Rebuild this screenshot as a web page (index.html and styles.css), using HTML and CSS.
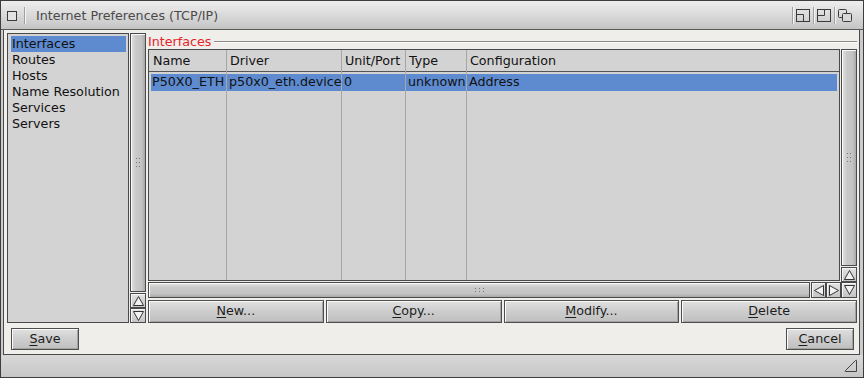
FILE: index.html
```html
<!DOCTYPE html>
<html lang="en">
<head>
    <meta charset="UTF-8">
    <title>Internet Preferences (TCP/IP)</title>
    <link rel="stylesheet" href="styles.css">
</head>
<body>
    <div class="window">
        <div class="titlebar">
            <span class="closebox"></span>
            <span class="tsep"></span>
            <div class="title">Internet Preferences (TCP/IP)</div>
            <span class="tsep"></span>
            <svg class="gadget" width="14" height="13" viewBox="0 0 14 13">
                <rect x="0.5" y="0.5" width="13" height="12" fill="none" stroke="#3a3a3a"/>
                <path d="M0.5 5.5 H7.5 V12.5" fill="none" stroke="#3a3a3a"/>
            </svg>
            <span class="tsep"></span>
            <svg class="gadget" width="14" height="13" viewBox="0 0 14 13">
                <rect x="0.5" y="0.5" width="13" height="12" fill="none" stroke="#3a3a3a"/>
                <path d="M0.5 6.5 H7.5 V0.5" fill="none" stroke="#3a3a3a"/>
            </svg>
            <span class="tsep"></span>
            <svg class="gadget" width="14" height="13" viewBox="0 0 14 13">
                <rect x="0.5" y="0.5" width="8" height="8" rx="1" fill="none" stroke="#3a3a3a"/>
                <rect x="4.5" y="4.5" width="9" height="8" rx="1" fill="#d8d8d8" stroke="#3a3a3a"/>
            </svg>
        </div>

        <div class="content">
            <div class="main">
                <div class="sidebar">
                    <div class="list">
                        <div class="item selected">Interfaces</div>
                        <div class="item">Routes</div>
                        <div class="item">Hosts</div>
                        <div class="item">Name Resolution</div>
                        <div class="item">Services</div>
                        <div class="item">Servers</div>
                    </div>
                    <div class="vscroll">
                        <div class="knob vknob">
                            <svg width="5" height="9" viewBox="0 0 5 9">
                                <rect x="0" y="0" width="1" height="1" fill="#777"/><rect x="3" y="0" width="1" height="1" fill="#777"/>
                                <rect x="0" y="4" width="1" height="1" fill="#777"/><rect x="3" y="4" width="1" height="1" fill="#777"/>
                                <rect x="0" y="8" width="1" height="1" fill="#777"/><rect x="3" y="8" width="1" height="1" fill="#777"/>
                            </svg>
                        </div>
                        <div class="arrow first">
                            <svg width="11" height="10" viewBox="0 0 11 10"><path d="M5.5 0.5 L10.5 9.5 H0.5 Z" fill="#f2f2f2" stroke="#333"/></svg>
                        </div>
                        <div class="arrow">
                            <svg width="11" height="10" viewBox="0 0 11 10"><path d="M0.5 0.5 H10.5 L5.5 9.5 Z" fill="#f2f2f2" stroke="#333"/></svg>
                        </div>
                    </div>
                </div>

                <div class="group">
                    <div class="group-label"><span>Interfaces</span></div>
                    <div class="listview">
                        <div class="table">
                            <div class="tcol c1"><div class="th">Name</div><div class="td sel">P50X0_ETH</div></div>
                            <div class="tcol c2"><div class="th">Driver</div><div class="td sel">p50x0_eth.device</div></div>
                            <div class="tcol c3"><div class="th">Unit/Port</div><div class="td sel">0</div></div>
                            <div class="tcol c4"><div class="th">Type</div><div class="td sel">unknown</div></div>
                            <div class="tcol c5"><div class="th">Configuration</div><div class="td sel">Address</div></div>
                        </div>
                        <div class="vscroll table-scroll">
                            <div class="knob vknob">
                                <svg width="5" height="9" viewBox="0 0 5 9">
                                    <rect x="0" y="0" width="1" height="1" fill="#777"/><rect x="3" y="0" width="1" height="1" fill="#777"/>
                                    <rect x="0" y="4" width="1" height="1" fill="#777"/><rect x="3" y="4" width="1" height="1" fill="#777"/>
                                    <rect x="0" y="8" width="1" height="1" fill="#777"/><rect x="3" y="8" width="1" height="1" fill="#777"/>
                                </svg>
                            </div>
                            <div class="arrow first">
                                <svg width="11" height="10" viewBox="0 0 11 10"><path d="M5.5 0.5 L10.5 9.5 H0.5 Z" fill="#f2f2f2" stroke="#333"/></svg>
                            </div>
                        </div>
                        <div class="hrow">
                            <div class="knob hknob">
                                <svg width="9" height="5" viewBox="0 0 9 5">
                                    <rect x="0" y="0" width="1" height="1" fill="#777"/><rect x="4" y="0" width="1" height="1" fill="#777"/><rect x="8" y="0" width="1" height="1" fill="#777"/>
                                    <rect x="0" y="3" width="1" height="1" fill="#777"/><rect x="4" y="3" width="1" height="1" fill="#777"/><rect x="8" y="3" width="1" height="1" fill="#777"/>
                                </svg>
                            </div>
                            <div class="harrow">
                                <svg width="10" height="11" viewBox="0 0 10 11"><path d="M0.5 5.5 L9.5 0.5 V10.5 Z" fill="#f2f2f2" stroke="#333"/></svg>
                            </div>
                            <div class="harrow">
                                <svg width="10" height="11" viewBox="0 0 10 11"><path d="M9.5 5.5 L0.5 0.5 V10.5 Z" fill="#f2f2f2" stroke="#333"/></svg>
                            </div>
                            <div class="harrow down">
                                <svg width="11" height="10" viewBox="0 0 11 10"><path d="M0.5 0.5 H10.5 L5.5 9.5 Z" fill="#f2f2f2" stroke="#333"/></svg>
                            </div>
                        </div>
                    </div>
                    <div class="actions">
                        <div class="btn"><u>N</u>ew...</div>
                        <div class="btn"><u>C</u>opy...</div>
                        <div class="btn"><u>M</u>odify...</div>
                        <div class="btn"><u>D</u>elete</div>
                    </div>
                </div>
            </div>

            <div class="footer">
                <div class="btn small"><u>S</u>ave</div>
                <div class="btn small"><u>C</u>ancel</div>
            </div>
        </div>

        <div class="statusbar">
            <svg width="14" height="14" viewBox="0 0 14 14">
                <path d="M12.5 1.5 Q12.5 0.5 11.5 1.5 L1.5 11.5 Q0.5 12.5 1.5 12.5 H12.5 Z" fill="none" stroke="#444"/>
            </svg>
        </div>
    </div>
</body>
</html>
```

FILE: styles.css
```css
* {
    box-sizing: border-box;
}
html, body {
    margin: 0;
    padding: 0;
}
body {
    font-family: "DejaVu Sans", sans-serif;
    font-size: 12.7px;
    color: #111;
    background: #cdcdcd;
}
.window {
    width: 864px;
    height: 378px;
    border: 1px solid #3d3d3d;
    background: #cbcbcb;
    display: flex;
    flex-direction: column;
}

/* title bar */
.titlebar {
    height: 29px;
    flex: none;
    border-bottom: 1px solid #5a5a5a;
    background: linear-gradient(#eeeeee, #d8d8d8 55%, #c4c4c4);
    display: flex;
    align-items: center;
    padding: 0 8px 0 6px;
    color: #4a4a4a;
}
.closebox {
    width: 10px;
    height: 10px;
    border: 1px solid #3a3a3a;
    background: #e2e2e2;
    margin-top: 2px;
    margin-right: 7px;
}
.tsep {
    width: 2px;
    height: 17px;
    border-left: 1px solid #a0a0a0;
    border-right: 1px solid #f4f4f4;
}
.title {
    flex: 1;
    margin-left: 10px;
    white-space: nowrap;
}
.gadget {
    margin: 0 3px 0 2px;
}

/* main area */
.content {
    flex: 1;
    margin: 0 3px 0 2px;
    border: 1px solid #4a4a4a;
    border-top: none;
    background: #efeeea;
    padding: 3px 2px 4px 3px;
    display: flex;
    flex-direction: column;
}
.main {
    height: 290px;
    display: flex;
}
.sidebar {
    width: 139px;
    display: flex;
    margin-right: 2px;
}
.list {
    width: 122px;
    border: 1px solid #4a4a4a;
    background: #d3d3d3;
    padding: 2px 2px 0 3px;
}
.item {
    height: 16px;
    line-height: 15px;
    padding-left: 1px;
    white-space: nowrap;
}
.item.selected {
    background: #5e8bd0;
}

/* scrollers */
.vscroll {
    width: 16px;
    margin-left: 1px;
    display: flex;
    flex-direction: column;
}
.knob {
    flex: 1;
    border: 1px solid #4a4a4a;
    box-shadow: inset 1px 1px #fafafa;
    display: flex;
    align-items: center;
    justify-content: center;
}
.vknob {
    background: linear-gradient(to right, #e4e4e4, #c9c9c9 35%, #c3c3c3 75%, #a9a9a9);
}
.hknob {
    background: linear-gradient(#e4e4e4, #c9c9c9 35%, #c3c3c3 75%, #a9a9a9);
    margin-right: 1px;
}
.arrow, .harrow {
    height: 15px;
    border: 1px solid #4a4a4a;
    background: linear-gradient(#e4e4e4, #c4c4c4);
    box-shadow: inset 1px 1px #f6f6f6;
    display: flex;
    align-items: center;
    justify-content: center;
    flex: none;
}
.arrow.first {
    margin-top: 1px;
}

/* group */
.group {
    flex: 1;
    display: flex;
    flex-direction: column;
}
.group-label {
    height: 16px;
    display: flex;
    align-items: center;
    color: #e2262a;
}
.group-label::after {
    content: "";
    flex: 1;
    margin-left: 3px;
    margin-top: 1px;
    border-top: 1px solid #8c8c8c;
    border-bottom: 1px solid #fbfbfb;
}
.listview {
    height: 249px;
    display: grid;
    grid-template-columns: 1fr 16px;
    grid-template-rows: 1fr 16px;
    column-gap: 1px;
}
.table {
    border: 1px solid #4a4a4a;
    background: #d3d3d3;
    margin-bottom: 1px;
    display: flex;
}
.table-scroll {
    margin-left: 0;
    width: 16px;
}
.tcol {
    border-right: 1px solid #a6a6a6;
    flex: none;
}
.c1 { width: 78px; }
.c2 { width: 115px; }
.c3 { width: 64px; }
.c4 { width: 61px; }
.c5 {
    flex: 1;
    border-right: none;
}
.th {
    height: 22px;
    line-height: 21px;
    padding-left: 3px;
    border-bottom: 1px solid #555;
    white-space: nowrap;
}
.c1 .th { padding-left: 4px; }
.td {
    margin-top: 2px;
    height: 17px;
    line-height: 15px;
    padding-left: 2px;
    white-space: nowrap;
}
.c1 .td {
    margin-left: 2px;
    padding-left: 1px;
}
.c5 .td {
    margin-right: 2px;
}
.td.sel {
    background: #5e8bd0;
}
.hrow {
    grid-column: 1 / 3;
    display: flex;
}
.harrow {
    width: 15px;
    height: 16px;
}
.harrow.down {
    width: 16px;
}

/* buttons */
.actions {
    margin-top: 2px;
    height: 23px;
    display: grid;
    grid-template-columns: repeat(4, 1fr);
    gap: 2px;
}
.btn {
    border: 1px solid #4e4e4e;
    background: linear-gradient(#e0e0e0, #cdcdcd 50%, #bfbfbf);
    box-shadow: inset 1px 1px #fafafa, inset -1px -1px #a2a2a2;
    text-align: center;
    line-height: 20px;
    color: #1c1c1c;
    white-space: nowrap;
}
.btn u {
    text-decoration-thickness: 1px;
    text-underline-offset: 2px;
}
.footer {
    margin-top: 5px;
    height: 22px;
    display: flex;
    justify-content: space-between;
    padding: 0 3px 0 4px;
}
.btn.small {
    width: 68px;
}

/* bottom bar */
.statusbar {
    height: 22px;
    flex: none;
    background: linear-gradient(#d8d8d8, #c6c6c6);
    display: flex;
    justify-content: flex-end;
    align-items: center;
    padding-right: 5px;
}
```
